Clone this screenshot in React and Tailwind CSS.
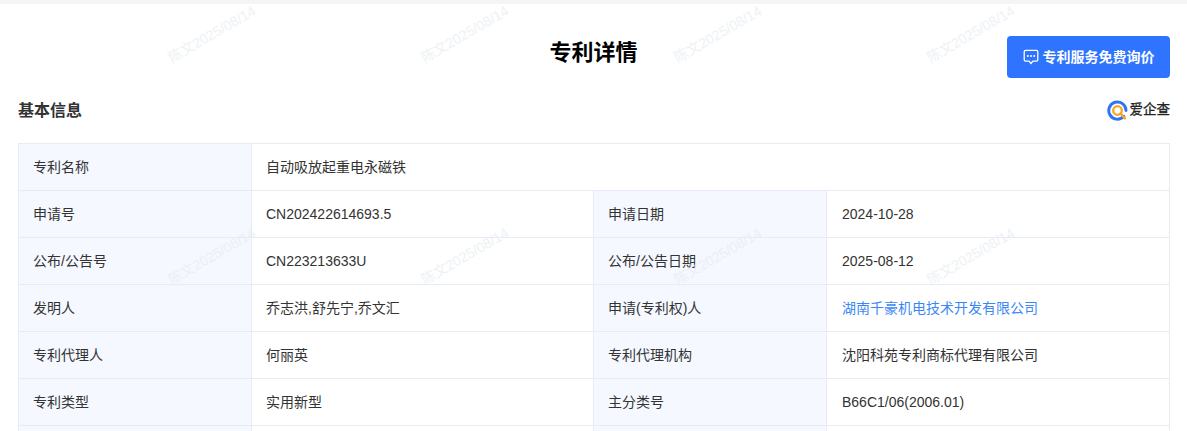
const FONT = "font-['Liberation_Sans','Noto_Sans_CJK_SC',sans-serif]";

const rows = [
  ["申请号", "CN202422614693.5", "申请日期", "2024-10-28"],
  ["公布/公告号", "CN223213633U", "公布/公告日期", "2025-08-12"],
  ["发明人", "乔志洪,舒先宁,乔文汇", "申请(专利权)人", "湖南千豪机电技术开发有限公司"],
  ["专利代理人", "何丽英", "专利代理机构", "沈阳科苑专利商标代理有限公司"],
  ["专利类型", "实用新型", "主分类号", "B66C1/06(2006.01)"],
  ["", "", "", ""],
];

function Label({ children }) {
  return (
    <div className="flex items-center pl-[14px] bg-[#f5f8ff] text-[#333333] border-r border-[#e6ebf5]">
      {children}
    </div>
  );
}

function Value({ children, className = "pl-[14px]", link }) {
  return (
    <div className={`flex items-center border-r border-[#e6ebf5] ${link ? "text-[#3d87f5]" : "text-[#333333]"} ${className}`}>
      {children}
    </div>
  );
}

function ChatIcon() {
  return (
    <svg width="16" height="16" viewBox="0 0 16 16" fill="none">
      <path
        d="M2.6 1.300h10.800c.8 0 1.400.6 1.400 1.400v8c0 .8-.6 1.400-1.400 1.400h-3.400L8 14.500l-2-2.400H2.600c-.8 0-1.400-.6-1.400-1.400v-8c0-.8.600-1.400 1.400-1.400z"
        stroke="white"
        strokeWidth="1.300"
      />
      <circle cx="4.800" cy="6.900" r="1" fill="white" />
      <circle cx="8" cy="6.900" r="1" fill="white" />
      <circle cx="11.200" cy="6.900" r="1" fill="white" />
    </svg>
  );
}

function Logo() {
  return (
    <svg width="21" height="21" viewBox="0 0 21 21" fill="none">
      <path d="M16.800 16.300A8.600 8.600 0 1 1 19 10.500" stroke="#2e74f5" strokeWidth="3" strokeLinecap="round" />
      <circle cx="10.500" cy="10.500" r="4.300" stroke="#f5a623" strokeWidth="2.300" />
      <path d="M13.500 13.500l4.200 4.700" stroke="#f5a623" strokeWidth="2.600" strokeLinecap="round" />
    </svg>
  );
}

export default function App() {
  return (
    <div className={`relative h-[431px] overflow-hidden bg-white text-[14px] ${FONT}`}>
      <div className="h-1 bg-[#f5f5f5]" />
      <div className="pl-[18px] pr-[17px]">
        <div className="relative flex h-[86px] items-center justify-center">
          <h1 className="mt-[12px] -translate-x-[0.5px] text-[22px] leading-[30px] font-bold text-black">专利详情</h1>
          <button className="absolute right-0 top-[32px] flex h-[42px] w-[163px] items-center justify-center gap-[4px] rounded bg-[#2e74ff] text-[14px] font-bold text-white">
            <ChatIcon />
            专利服务免费询价
          </button>
        </div>
        <div className="flex h-[40px] items-center justify-between">
          <span className="mt-[2px] text-[16px] font-bold text-[#333333]">基本信息</span>
          <span className="flex items-center gap-[2px] text-[13.500px] text-[#222222] [-webkit-text-stroke:0.3px_#222222]">
            <Logo />
            爱企查
          </span>
        </div>
        <div className="mt-[13px] border-t border-l border-[#e6ebf5]">
          <div className="grid h-[47px] grid-cols-[233px_1fr] border-b border-[#e6ebf5]">
            <Label>专利名称</Label>
            <Value>自动吸放起重电永磁铁</Value>
          </div>
          {rows.map((r, i) => (
            <div key={i} className="grid h-[47px] grid-cols-[233px_342px_233px_1fr] border-b border-[#e6ebf5]">
              <Label>{r[0]}</Label>
              <Value>{r[1]}</Value>
              <Label>{r[2]}</Label>
              <Value link={i === 2} className="pl-[15px]">{r[3]}</Value>
            </div>
          ))}
        </div>
      </div>
      <div className="pointer-events-none absolute left-[162px] top-[-1px] grid grid-cols-[repeat(4,253px)] auto-rows-[222px]">
        {Array.from({ length: 8 }).map((_, i) => (
          <div key={i} className="flex h-[70px] w-[100px] items-center justify-center">
            <span className="block -rotate-30 whitespace-nowrap text-[14px] text-[#e3ebf0] opacity-60">陈文2025/08/14</span>
          </div>
        ))}
      </div>
    </div>
  );
}
